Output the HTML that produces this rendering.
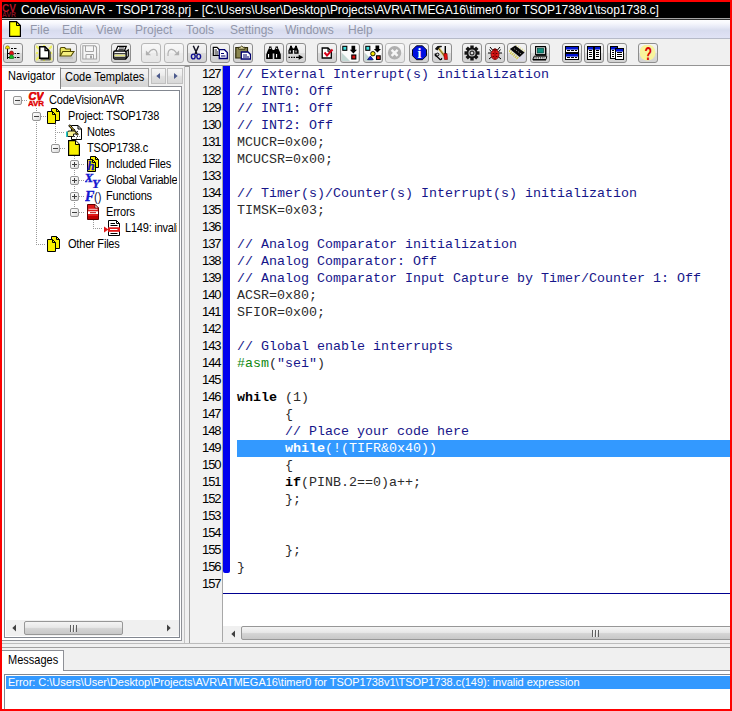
<!DOCTYPE html>
<html>
<head>
<meta charset="utf-8">
<title>CodeVisionAVR</title>
<style>
*{margin:0;padding:0;box-sizing:border-box}
html,body{width:732px;height:711px;overflow:hidden;background:#fe0000}
body{position:relative;font-family:"Liberation Sans",sans-serif;font-size:11px;color:#000}
.abs{position:absolute}
#win{position:absolute;left:2px;top:2px;width:728px;height:707px;background:#f0f0f0;overflow:hidden}
/* coordinates inside #win are page coords minus 2 */
#title{position:absolute;left:0;top:0;width:728px;height:16px;background:#000}
#title .t{position:absolute;left:19px;top:0;height:16px;line-height:16px;color:#fff;font-size:12px;white-space:nowrap;letter-spacing:-0.047px}
#tline{position:absolute;left:0;top:16px;width:728px;height:2px;background:linear-gradient(#a4a4a4 0,#a4a4a4 50%,#2c2c2c 50%,#2c2c2c 100%)}
#menu{position:absolute;left:0;top:18px;width:728px;height:18px;background:linear-gradient(#fdfdff 0%,#f7f8fd 17%,#e6e9f6 40%,#d8dcee 58%,#dcdff2 78%,#e0e3f5 100%)}
#menu span{position:absolute;top:2px;height:16px;line-height:16px;font-size:12px;color:#9297aa;white-space:nowrap}
#mline{position:absolute;left:0;top:36px;width:728px;height:1px;background:#b6bac8}
#tb{position:absolute;left:0;top:37px;width:728px;height:26px;background:#f0f0f0}
.b{position:absolute;top:4px;width:20px;height:20px;border:1px solid #8e8e8e;border-radius:3px;background:linear-gradient(#f4f4f4 0%,#ebebeb 48%,#dadada 52%,#d2d2d2 100%);overflow:hidden}
.b.dis{border-color:#b8b8b8;background:linear-gradient(#f8f8f8 0%,#f1f1f1 48%,#ebebeb 52%,#e6e6e6 100%)}
.b.hot{background:linear-gradient(#f2f2e2 0%,#ecead2 48%,#dedcc4 52%,#d8d8c6 100%)}
.b svg{position:absolute;left:1px;top:1px;width:16px;height:16px}
#tbline{position:absolute;left:0;top:63px;width:728px;height:1.500px;background:#949494}

/* left panel (coords inside #win = page-2) */
#lp{position:absolute;left:0;top:64px;width:183px;height:576px;background:#f0f0f0}
#lpr{position:absolute;left:182px;top:64px;width:1px;height:577px;background:#c4c4c4}
#tab1{position:absolute;left:0;top:1px;width:59px;height:22px;z-index:3;background:#fdfdfd;border-right:1px solid #828282;border-top:1px solid #ececec}
#tab1 span{position:absolute;left:6px;top:2px;line-height:13px;font-size:11px;letter-spacing:0px;white-space:nowrap;transform:scaleY(1.1);transform-origin:0 80%}
#tab2{position:absolute;left:59px;top:2px;width:88px;height:19px;z-index:2;border:1px solid #a0a0a0;border-bottom:none;border-left:none;background:linear-gradient(#f4f4f4 0%,#ececec 45%,#dedede 55%,#d4d4d4 100%)}
#tab2 span{position:absolute;left:4px;top:2px;line-height:13px;font-size:11px;white-space:nowrap;transform:scaleY(1.1);transform-origin:0 80%}
.sb{position:absolute;top:2px;height:16px;border:1px solid #c0c0c0;background:linear-gradient(#f6f6f6 0%,#ececec 45%,#e0e0e0 55%,#d8d8d8 100%)}
#page{position:absolute;left:0;top:20px;width:180px;height:555px;background:#fff;border:1px solid #8e9096;border-left:none}
#treebox{position:absolute;left:2px;top:24px;width:176px;height:548px;background:#fff;border:1px solid #828790;overflow:hidden}
#tree{position:absolute;left:0;top:0;width:172px;height:528px;overflow:hidden}
.tl{position:absolute;font-size:11px;line-height:14px;white-space:nowrap;letter-spacing:-0.2px;transform:scaleY(1.1);transform-origin:0 80%}
.xb{position:absolute;z-index:2;width:9px;height:9px;border:1px solid #969696;border-radius:2px;background:linear-gradient(135deg,#fff 0%,#f0f0f0 50%,#d8d8d8 100%)}
.xb .h{position:absolute;left:1px;top:3px;width:5px;height:1px;background:#404040}
.xb .v{position:absolute;left:3px;top:1px;width:1px;height:5px;background:#404040}
.hd{position:absolute;height:1px;background:repeating-linear-gradient(90deg,#9a9a9a 0,#9a9a9a 1px,transparent 1px,transparent 2px)}
.vd{position:absolute;width:1px;background:repeating-linear-gradient(180deg,#9a9a9a 0,#9a9a9a 1px,transparent 1px,transparent 2px)}
#hs1{position:absolute;left:1px;top:529px;width:173px;height:16px;background:#f0f0f0}
.thumb{position:absolute;border:1px solid #979797;border-radius:2px;background:linear-gradient(#f4f4f4 0%,#e8e8e8 45%,#d4d4d4 55%,#c8c8c8 100%)}
.grip{position:absolute;width:7px;height:7px;background:repeating-linear-gradient(90deg,#606060 0,#606060 1px,#f0f0f0 1px,#f0f0f0 2px,transparent 2px,transparent 3px)}
/* editor */
#edl{position:absolute;left:187px;top:64px;width:1px;height:577px;background:#a0a0a0}
#ed{position:absolute;left:188px;top:64px;width:540px;height:576px;background:#fff;overflow:hidden}
#gut{position:absolute;left:0;top:0;width:33px;height:576px;background:#f2f2f2;border-right:1px solid #a8a8a8}
#nums{position:absolute;left:0;top:-1px;width:32px;text-align:right;font-size:13px;line-height:17px;letter-spacing:-1.100px;color:#000}
#nums div{height:17px;padding-right:1.500px}
#bar{position:absolute;left:33px;top:0;width:7px;height:507px;background:#0000ee;border-radius:0 0 2px 2px}
#code{position:absolute;left:47px;top:0px;width:500px;font-family:"Liberation Mono",monospace;font-size:13.333px;line-height:17px;color:#2c2c2c}
#code div{height:17px;white-space:pre}
#code .c{color:#16168a}
#code .g{color:#108810}
#code .k{font-weight:bold;color:#000}
#code .sel{background:#3399ff;color:#fff}
#code .sel span{color:#fff}
#eof{position:absolute;left:33px;top:527px;width:510px;height:1px;background:#000090}
#hs2{position:absolute;left:33px;top:560px;width:510px;height:16px;background:#f0f0f0}
/* bottom */
#sp1{position:absolute;left:0;top:640.500px;width:728px;height:1px;background:#bcbcbc}
#sp2{position:absolute;left:0;top:645px;width:728px;height:1px;background:#a0a0a0}
#mtab{position:absolute;left:0;top:648px;width:62px;height:21px;background:#fff;border-top:1px solid #8e9096;border-right:1px solid #8e9096}
#mtab span{position:absolute;left:6px;top:3px;font-size:11px;line-height:13px;transform:scaleY(1.1);transform-origin:0 80%}
#mpage{position:absolute;left:0;top:668px;width:728px;height:40px;background:#fff;border-top:1px solid #8e9096}
#mtab{z-index:2}
#mlist{position:absolute;left:2px;top:672px;width:730px;height:40px;border:1px solid #828790;background:#fff}
#mrow{position:absolute;left:1px;top:1px;width:726px;height:13px;background:#3399ff;color:#fff;font-size:11px;line-height:13px;white-space:nowrap;padding-left:2px;letter-spacing:-0.035px}
</style>
</head>
<body>
<div id="win">
  <div id="title">
    <svg class="abs" style="left:0;top:1px" width="16" height="15" viewBox="0 0 16 15">
      <text x="0" y="8.5" font-family="Liberation Sans" font-weight="bold" font-size="10.5" fill="#b81428" textLength="14" lengthAdjust="spacingAndGlyphs">CV</text>
      <text x="0" y="14" font-family="Liberation Sans" font-weight="bold" font-size="6.5" fill="#801020" textLength="14" lengthAdjust="spacingAndGlyphs">AVR</text>
    </svg>
    <div class="t" id="titletext">CodeVisionAVR - TSOP1738.prj - [C:\Users\User\Desktop\Projects\AVR\ATMEGA16\timer0 for TSOP1738v1\tsop1738.c]</div>
  </div>
  <div id="tline"></div>
  <div id="menu">
    <svg class="abs" style="left:7px;top:1px" width="12" height="16" viewBox="0 0 12 16">
      <path d="M0.600 0.600H7.500L11.400 4.500V15.400H0.600Z" fill="#ffff00" stroke="#000" stroke-width="1.200"/>
      <path d="M7.500 1V4.500H11" fill="none" stroke="#000" stroke-width="1"/>
    </svg>
    <span style="left:28px">File</span>
    <span style="left:60px">Edit</span>
    <span style="left:94px">View</span>
    <span style="left:133px">Project</span>
    <span style="left:184px">Tools</span>
    <span style="left:228px">Settings</span>
    <span style="left:283px">Windows</span>
    <span style="left:346px">Help</span>
  </div>
  <div id="mline"></div>
  <div id="tb">
    <div class="b " style="left:1px"><svg viewBox="0 0 16 16"><path d="M2.500 3V14M2.500 8.500H5M2.500 12.500H5" stroke="#000" fill="none"/>
<path d="M0.500 2.800Q0.500 0.800 2.500 0.800Q4.500 0.800 4.500 2.800V3.800H0.500Z" fill="#f4e400" stroke="#706000" stroke-width=".600"/>
<path d="M4.500 8Q4.500 6 6.500 6Q8.500 6 8.500 8V9.500H4.500Z" fill="#e01010" stroke="#700000" stroke-width=".600"/>
<path d="M4.500 12Q4.500 10 6.500 10Q8.500 10 8.500 12V13.500H4.500Z" fill="#10c020" stroke="#005000" stroke-width=".600"/>
<path d="M6 3.500H8M9 3.500H11.500M9.500 8.500H11M12 8.500H14.500M9.500 12.500H11M12 12.500H14.500" stroke="#000" fill="none"/></svg></div>
<div class="b hot" style="left:32px"><svg viewBox="0 0 16 16"><path d="M0 1L3 4M16 1L13 4M0 15L3 12M16 15L13 12M8 -1V1M8 17V14.500M-1 8H2M17 8H14.500" stroke="#eef060" stroke-width="2"/>
<path d="M4.500 14.800H14.200V6.500" stroke="#303030" stroke-width="1" fill="none"/>
<path d="M3.700 1.700H9L12.800 5.500V13.300H3.700Z" fill="#fff" stroke="#000" stroke-width="1.500"/>
<path d="M9 1.700V5.500H12.800" fill="none" stroke="#000" stroke-width="1.300"/></svg></div>
<div class="b " style="left:54.5px"><svg viewBox="0 0 16 16"><path d="M1 13H14" stroke="#c4c4c4" stroke-width="2.500"/>
<path d="M1.200 11V4Q1.200 2.500 2.700 2.500H5.500L7 4H11.500V6.500" fill="#ece860" stroke="#504800" stroke-width="1.100"/>
<path d="M1.200 11L3.800 6.500H15L12 11Z" fill="#f6f080" stroke="#504800" stroke-width="1.100"/></svg></div>
<div class="b dis" style="left:77.5px"><svg viewBox="0 0 16 16"><path d="M0.800 0.800H13L14.500 2.300V14H0.800Z" fill="#f6f6f6" stroke="#a4a4a4" stroke-width="1.100"/>
<path d="M3.500 0.800V6.500H11.500V0.800M4 14V9.500H11.500V14" fill="none" stroke="#a4a4a4"/>
<rect x="8" y="10.500" width="2" height="3" fill="#a4a4a4"/></svg></div>
<div class="b " style="left:108.5px"><svg viewBox="0 0 16 16"><path d="M2.800 6L4.800 1.300H13.300L11.300 6" fill="#fff" stroke="#000" stroke-width="1.200"/>
<path d="M6 2.900H11.300M5.500 4.400H10.800" stroke="#000" stroke-width=".800"/>
<path d="M13 6.500L15.300 4.800V11L13 13.800Z" fill="#d8d8d8" stroke="#000" stroke-width="1.100"/>
<rect x="0.700" y="6" width="12.300" height="8" rx="1.200" fill="#f6f6f6" stroke="#000" stroke-width="1.300"/>
<path d="M1.300 8.800H12.500" stroke="#000" stroke-width="1.100"/>
<path d="M1.600 10.600H12.200" stroke="#e4e478" stroke-width="1.500"/>
<path d="M1.300 12.300H12.500" stroke="#000" stroke-width="1"/></svg></div>
<div class="b dis" style="left:139px"><svg viewBox="0 0 16 16"><path d="M5.500 8Q8 4 11 4.300Q14.500 5 14 11" fill="none" stroke="#b0b0b0" stroke-width="1.200"/>
<path d="M2.900 5.400V10.200H8Z" fill="#b0b0b0"/></svg></div>
<div class="b dis" style="left:162px"><svg viewBox="0 0 16 16"><path d="M10.500 8Q8 4 5 4.300Q1.500 5 2 11" fill="none" stroke="#b0b0b0" stroke-width="1.200"/>
<path d="M13.100 5.400V10.200H8Z" fill="#b0b0b0"/></svg></div>
<div class="b " style="left:184.5px"><svg viewBox="0 0 16 16"><path d="M4.300 0.800L8 9M9.700 0.800L6 9" stroke="#101020" stroke-width="1.500" fill="none"/>
<ellipse cx="4.300" cy="11.500" rx="1.900" ry="2.400" fill="none" stroke="#101090" stroke-width="1.400"/>
<ellipse cx="9.700" cy="11.500" rx="1.900" ry="2.400" fill="none" stroke="#101090" stroke-width="1.400"/></svg></div>
<div class="b " style="left:207.5px"><svg viewBox="0 0 16 16"><path d="M1.300 2.300H5L7.500 4.800V10.500H1.300Z" fill="#fff" stroke="#000" stroke-width="1.200"/>
<path d="M2.500 5H5M2.500 7H6M2.500 9H6" stroke="#000" stroke-width=".900"/>
<path d="M7.300 4.700H12.500L15.300 7.500V13.500H7.300Z" fill="#fff" stroke="#000070" stroke-width="1.300"/>
<path d="M9 8.500H12M9 11H13.500" stroke="#000070" stroke-width="1.100"/></svg></div>
<div class="b " style="left:230.5px"><svg viewBox="0 0 16 16"><path d="M0.800 2.500H12.500V13H0.800Z" fill="#8a8650" stroke="#2c2808" stroke-width="1.200"/>
<path d="M3.500 3.500V2.300H5.200Q6.700 -0.300 8.200 2.300H10V4.200H3.500Z" fill="#e0dca0" stroke="#2c2808" stroke-width=".900"/>
<path d="M6.300 7H13L15.500 9.500V14H6.300Z" fill="#fff" stroke="#000070" stroke-width="1.300"/>
<path d="M8 10H12M8 12H14" stroke="#000070" stroke-width="1.100"/></svg></div>
<div class="b " style="left:262px"><svg viewBox="0 0 16 16"><path d="M3 1.500H5.500V3L6.500 4.500V5H8.500V4.500L9.500 3V1.500H12V3L13.500 6L14.800 9.500V14H8.300V8.500H6.700V14H0.200V9.500L1.500 6L3 3Z" fill="#000"/>
<rect x="2" y="9" width="1.100" height="3.500" fill="#fff"/><rect x="10" y="9" width="1.100" height="3.500" fill="#fff"/>
<rect x="3.700" y="2.800" width="1" height="1.200" fill="#fff"/><rect x="10.200" y="2.800" width="1" height="1.200" fill="#fff"/></svg></div>
<div class="b " style="left:284px"><svg viewBox="0 0 16 16"><path d="M2 0.800H4V2L4.800 3V3.500H6.200V3L7 2V0.800H9V2L10.600 5.500V8.700H6.200V5H4.800V8.700H0.400V5.500L2 2Z" fill="#000"/>
<rect x="1.700" y="5.500" width="1" height="2" fill="#fff"/><rect x="7.500" y="5.500" width="1" height="2" fill="#fff"/>
<path d="M0.500 12.300H2M3 12.300H4.500M5.500 12.300H7M8 12.300H11.500" stroke="#000" stroke-width="1.300"/>
<path d="M10.700 9.800L15.300 12.300L10.700 14.800Z" fill="#000"/></svg></div>
<div class="b " style="left:314.5px"><svg viewBox="0 0 16 16"><path d="M3.200 3H9L12.300 6.300V13H3.200Z" fill="#fff" stroke="#000" stroke-width="1.300"/>
<path d="M9 3V6.300H12.300" fill="none" stroke="#000" stroke-width="1.100"/>
<path d="M5.500 7.500L8 10.500L13.500 4.500" fill="none" stroke="#d80018" stroke-width="2"/></svg></div>
<div class="b " style="left:338px"><svg viewBox="0 0 16 16"><rect x="-1" y="-1" width="18" height="18" fill="#fbfbfb"/><path d="M-1 7V17H9Z" fill="#c4d8d4"/>
<rect x="0.800" y="1.300" width="4" height="4" fill="#40e0e0" stroke="#000" stroke-width="1.100"/>
<rect x="9.800" y="10" width="4" height="4" fill="#e01010" stroke="#000" stroke-width="1.100"/>
<path d="M9.500 0.800V4.800H7.800L11.400 8.400L15 4.800H13.200V0.800Z" fill="#000"/></svg></div>
<div class="b " style="left:360.5px"><svg viewBox="0 0 16 16"><rect x="-1" y="-1" width="18" height="18" fill="#fbfbfb"/><path d="M-1 7V17H9Z" fill="#c4d8d4"/>
<rect x="0.800" y="1.300" width="4" height="4" fill="#40e0e0" stroke="#000" stroke-width="1.100"/>
<rect x="11.500" y="10.800" width="3.700" height="3.700" fill="#e02010" stroke="#000" stroke-width="1.100"/>
<path d="M10.500 0.500V4H8.800L12.400 7.600L16 4H14.200V0.500Z" fill="#000"/>
<circle cx="7.900" cy="8.700" r="2.200" fill="#f8e800" stroke="#000" stroke-width=".900"/>
<path d="M2.500 14.700L5.400 11L8.300 14.700Z" fill="#1020d8" stroke="#000050" stroke-width=".700"/></svg></div>
<div class="b dis" style="left:383px"><svg viewBox="0 0 16 16"><circle cx="7.600" cy="7.800" r="6.700" fill="#b0b0b0"/>
<path d="M4.600 4.800L10.600 10.800M10.600 4.800L4.600 10.800" stroke="#f6f6f6" stroke-width="2.400"/></svg></div>
<div class="b " style="left:406.5px"><svg viewBox="0 0 16 16"><path d="M5.500 0.800H11.500L15.500 4.800V10.700L11.500 14.700H5.500L1.500 10.700V4.800Z" fill="#0010e0" stroke="#000" stroke-width=".900"/>
<text x="8.500" y="13" text-anchor="middle" font-family="Liberation Serif" font-weight="bold" font-size="14" fill="#fff">i</text></svg></div>
<div class="b " style="left:430px"><svg viewBox="0 0 16 16"><path d="M4.500 3L12.500 13.500" stroke="#d4bc50" stroke-width="2.200"/>
<path d="M4 2.500L12.500 13.800" stroke="#504010" stroke-width=".700"/>
<path d="M0.800 4L3.500 1L7.500 0.800L8 2L5.500 2.500L3.500 5.500Z" fill="#101010"/>
<path d="M11.300 1V9" stroke="#000" stroke-width="1.400"/>
<path d="M9.800 8.500H13L13.500 14.500H10.500Z" fill="#e81010" stroke="#700000" stroke-width=".600"/>
<path d="M1.500 8.500Q0.500 11 3 11.500L6 14.500Q8 15 7.500 13" fill="none" stroke="#000" stroke-width="1.300"/>
<circle cx="3.500" cy="9.500" r="1.400" fill="none" stroke="#000" stroke-width="1"/></svg></div>
<div class="b " style="left:460px"><svg viewBox="0 0 16 16"><g transform="translate(8 8)"><g fill="#141414">
<rect x="-1.700" y="-7.500" width="3.400" height="15"/>
<rect x="-1.700" y="-7.500" width="3.400" height="15" transform="rotate(45)"/>
<rect x="-1.700" y="-7.500" width="3.400" height="15" transform="rotate(90)"/>
<rect x="-1.700" y="-7.500" width="3.400" height="15" transform="rotate(135)"/>
<circle r="5.400"/></g>
<circle r="3.600" fill="#c8c8c8"/><circle r="2.500" fill="#303030"/><circle r="1.300" fill="#d8d8d8"/></g></svg></div>
<div class="b " style="left:482.5px"><svg viewBox="0 0 16 16"><path d="M3 2L5.500 5M13 2L10.500 5M1 8H4M15 8H12M2 14L5 11.500M14 14L11 11.500M2.500 4.500L4.500 7M13.500 4.500L11.500 7" stroke="#000" stroke-width="1" fill="none"/>
<ellipse cx="8" cy="9.500" rx="4" ry="5" fill="#e41818" stroke="#700000" stroke-width=".8"/>
<path d="M5.500 5Q8 2 10.500 5Z" fill="#a00000" stroke="#500000" stroke-width=".6"/>
<path d="M8 5V14.500" stroke="#700000" stroke-width=".8"/>
<circle cx="6.300" cy="8.500" r=".8" fill="#600000"/><circle cx="9.700" cy="8.500" r=".8" fill="#600000"/><circle cx="6.300" cy="11.500" r=".8" fill="#600000"/><circle cx="9.700" cy="11.500" r=".8" fill="#600000"/></svg></div>
<div class="b " style="left:505px"><svg viewBox="0 0 16 16"><path d="M-1 9L9 17H17V6Z" fill="#dcdcec" opacity=".7"/>
<path d="M0 6L9.500 14" stroke="#d4cc30" stroke-width="3" stroke-dasharray="1 1.100"/>
<path d="M7.200 0L16.200 6.800" stroke="#e4e090" stroke-width="1.800" stroke-dasharray="1 1.400"/>
<path d="M0.800 3.900L6.200 0.600L15.600 7.600L10.700 12.100Z" fill="#080808"/>
<path d="M5 3.500L12.500 9.300" stroke="#9a9a9a" stroke-width=".800" stroke-dasharray="1.500 1"/></svg></div>
<div class="b " style="left:528px"><svg viewBox="0 0 16 16"><path d="M3.600 1.600H13.400V9.800H3.600Z" fill="#ececec" stroke="#000" stroke-width="1.100"/>
<path d="M4 10H13.800V2.500" fill="none" stroke="#000" stroke-width="1.300"/>
<rect x="5.300" y="3.200" width="6.200" height="4.800" fill="#109080" stroke="#004038" stroke-width=".700"/>
<path d="M2.200 11.200H14.800L14 14.500H0.800Z" fill="#f4f4f4" stroke="#000" stroke-width="1"/>
<path d="M2.500 12.800H13.500" stroke="#000" stroke-width="1.200" stroke-dasharray="1 .800"/>
<path d="M1 15H14" stroke="#000" stroke-width="1"/></svg></div>
<div class="b " style="left:560px"><svg viewBox="0 0 16 16"><rect x="1.5" y="1.5" width="13" height="6" fill="#fff" stroke="#000"/><rect x="2" y="2" width="12" height="2.600" fill="#0014d0"/><rect x="1.5" y="8.5" width="13" height="6" fill="#fff" stroke="#000"/><rect x="2" y="9" width="12" height="2.600" fill="#0014d0"/><path d="M3 5.500H6M7 5.500H10M11 5.500H13M3 12.500H6M7 12.500H10M11 12.500H13" stroke="#000"/></svg></div>
<div class="b " style="left:582px"><svg viewBox="0 0 16 16"><rect x="1.5" y="1.5" width="6" height="13" fill="#fff" stroke="#000"/><rect x="2" y="2" width="5" height="2.600" fill="#0014d0"/><rect x="8.5" y="1.5" width="6" height="13" fill="#fff" stroke="#000"/><rect x="9" y="2" width="5" height="2.600" fill="#0014d0"/><path d="M3 5.500H6M3 7.500H6M3 9.500H6M3 11.500H6M10 5.500H13M10 7.500H13M10 9.500H13M10 11.500H13" stroke="#000"/></svg></div>
<div class="b " style="left:604.5px"><svg viewBox="0 0 16 16"><rect x="1.5" y="1.5" width="7" height="12" fill="#fff" stroke="#000"/><rect x="2" y="2" width="6" height="2.600" fill="#0014d0"/><rect x="6.5" y="3.5" width="8" height="11" fill="#fff" stroke="#000"/><rect x="7" y="4" width="7" height="2.600" fill="#0014d0"/><path d="M3 5.500H5M3 7.500H5M3 9.500H5M3 11.500H5M8 7.500H13M8 9.500H13M8 11.500H13" stroke="#000"/></svg></div>
<div class="b " style="left:636px"><svg viewBox="0 0 16 16"><circle cx="7.500" cy="7.500" r="8" fill="#f8f49c"/>
<text x="8.300" y="14.500" text-anchor="middle" font-family="Liberation Sans" font-weight="bold" font-size="17.500" fill="#dc0000" textLength="7.500" lengthAdjust="spacingAndGlyphs">?</text></svg></div>
  </div>
  <div id="tbline"></div>
  <div id="lp">
    <div id="tab1"><span>Navigator</span></div>
    <div id="tab2"><span>Code Templates</span></div>
    <div class="sb" style="left:149px;width:15px"><svg class="abs" style="left:4px;top:4px" width="4" height="6" viewBox="0 0 4 6"><path d="M4 0V6L0.300 3Z" fill="#4c5a8c"/></svg></div>
    <div class="sb" style="left:165px;width:16px"><svg class="abs" style="left:6px;top:4px" width="4" height="6" viewBox="0 0 4 6"><path d="M0 0V6L3.700 3Z" fill="#4c5a8c"/></svg></div>
    <div id="page"></div>
    <div id="treebox">
      <div id="tree">
<div class="hd" style="left:17px;top:9px;width:5px"></div>
<div class="xb" style="left:8px;top:5px"><i class="h"></i></div>
<svg class="abs" style="left:23px;top:1px" width="16" height="16" viewBox="0 0 16 16"><text x="0.500" y="8.300" font-family="Liberation Sans" font-weight="bold" font-style="italic" font-size="10.500" fill="#e00000" stroke="#e00000" stroke-width=".600" textLength="15" lengthAdjust="spacingAndGlyphs">CV</text>
<text x="0" y="14" font-family="Liberation Sans" font-weight="bold" font-size="7.500" fill="#e00000" stroke="#e00000" stroke-width=".400" textLength="16" lengthAdjust="spacingAndGlyphs">AVR</text></svg>
<div class="tl" style="left:44px;top:2px">CodeVisionAVR</div>
<div class="hd" style="left:36px;top:25px;width:5px"></div>
<div class="xb" style="left:27px;top:21px"><i class="h"></i></div>
<svg class="abs" style="left:42px;top:17px" width="13" height="16" viewBox="0 0 13 16"><path d="M4.500 0.500H9.500L12.500 3.500V12.500H4.500Z" fill="#f8f000" stroke="#000"/>
<path d="M9.500 0.500V3.500H12.500" fill="none" stroke="#000"/>
<path d="M0.500 3.500H5.500L8.500 6.500V15.500H0.500Z" fill="#f8f000" stroke="#000"/>
<path d="M5.500 3.500V6.500H8.500" fill="none" stroke="#000"/></svg>
<div class="tl" style="left:63px;top:18px">Project: TSOP1738</div>
<div class="hd" style="left:50px;top:41px;width:10px"></div>
<svg class="abs" style="left:61px;top:33px" width="16" height="16" viewBox="0 0 16 16"><path d="M5.500 1.500H12L15.500 5V15.500H5.500Z" fill="#fff" stroke="#000"/>
<path d="M12 1.500V5H15.500" fill="none" stroke="#000"/>
<path d="M8 5.500H10M11 7.500H13M8 12.500H9.500M11 12.500H13.500M10 14H12" stroke="#000" stroke-width=".8" stroke-dasharray="1 1"/>
<path d="M3 1L12 11" stroke="#000" stroke-width="2.200"/>
<path d="M3.500 1.500L11.500 10.500" stroke="#e8c830" stroke-width="1"/>
<path d="M1.500 8.500Q1.500 7 3 7H8Q10 7 10 9V10H7.500V12.500H1.500Z" fill="#f8f090" stroke="#000" stroke-width=".9"/>
<path d="M0.800 7.500V13" stroke="#20c8c8" stroke-width="1.600"/></svg>
<div class="tl" style="left:82px;top:34px">Notes</div>
<div class="hd" style="left:55px;top:57px;width:5px"></div>
<div class="xb" style="left:46px;top:53px"><i class="h"></i></div>
<svg class="abs" style="left:62px;top:49px" width="13" height="16" viewBox="0 0 13 16"><path d="M1.600 0.600H8.500L12.400 4.500V15.400H1.600Z" fill="#f8f000" stroke="#000" stroke-width="1.200"/>
<path d="M8.500 0.600V4.500H12.400" fill="#fff8a0" stroke="#000" stroke-width="1"/></svg>
<div class="tl" style="left:82px;top:50px">TSOP1738.c</div>
<div class="hd" style="left:74px;top:73px;width:5px"></div>
<div class="xb" style="left:65px;top:69px"><i class="h"></i><i class="v"></i></div>
<svg class="abs" style="left:81px;top:65px" width="14" height="16" viewBox="0 0 14 16"><path d="M4.500 0.500H9.500L12.500 3.500V11.500H4.500Z" fill="#f8f000" stroke="#000"/>
<path d="M9.500 0.500V3.500H12.500" fill="none" stroke="#000"/>
<path d="M1.500 3.500H6.500L9.500 6.500V15.500H1.500Z" fill="#f8f000" stroke="#000"/>
<path d="M6.500 3.500V6.500H9.500" fill="none" stroke="#000"/>
<text x="1.500" y="14.300" font-family="Liberation Serif" font-weight="bold" font-style="italic" font-size="13" fill="#1414b8" stroke="#1414b8" stroke-width=".300">h</text></svg>
<div class="tl" style="left:101px;top:66px">Included Files</div>
<div class="hd" style="left:74px;top:89px;width:5px"></div>
<div class="xb" style="left:65px;top:85px"><i class="h"></i><i class="v"></i></div>
<svg class="abs" style="left:80px;top:81px" width="16" height="16" viewBox="0 0 16 16"><text x="-0.500" y="9.500" font-family="Liberation Serif" font-weight="bold" font-style="italic" font-size="13" fill="#1418d0" stroke="#1418d0" stroke-width=".400">X</text>
<text x="7" y="15.500" font-family="Liberation Serif" font-weight="bold" font-style="italic" font-size="13" fill="#1418d0" stroke="#1418d0" stroke-width=".400">Y</text></svg>
<div class="tl" style="left:101px;top:82px">Global Variables</div>
<div class="hd" style="left:74px;top:105px;width:5px"></div>
<div class="xb" style="left:65px;top:101px"><i class="h"></i><i class="v"></i></div>
<svg class="abs" style="left:80px;top:97px" width="17" height="16" viewBox="0 0 17 16"><text x="0" y="13" font-family="Liberation Serif" font-weight="bold" font-style="italic" font-size="14" fill="#1418d0" stroke="#1418d0" stroke-width=".400">F</text>
<text x="9" y="12.500" font-family="Liberation Sans" font-size="13" fill="#101040" textLength="7.500" lengthAdjust="spacingAndGlyphs">()</text></svg>
<div class="tl" style="left:101px;top:98px">Functions</div>
<div class="hd" style="left:74px;top:121px;width:5px"></div>
<div class="xb" style="left:65px;top:117px"><i class="h"></i></div>
<svg class="abs" style="left:80px;top:113px" width="15" height="16" viewBox="0 0 15 16"><g transform="translate(2 0)"><path d="M0.500 0.500H8L11.500 4V15.500H0.500Z" fill="#e01818" stroke="#600000"/>
<path d="M8 0.500V4H11.500Z" fill="#fff" stroke="#600000" stroke-width=".800"/>
<rect x="1.500" y="4.800" width="9" height="1" fill="#f8d0d0"/>
<rect x="1" y="7.300" width="10" height="2.700" fill="#fff"/>
<rect x="3" y="8.200" width="6" height="1" fill="#c00000"/>
<rect x="1" y="12" width="10" height="3" fill="#c00000"/></g></svg>
<div class="tl" style="left:101px;top:114px">Errors</div>
<div class="hd" style="left:88px;top:137px;width:10px"></div>
<svg class="abs" style="left:99px;top:129px" width="16" height="16" viewBox="0 0 16 16"><path d="M4.500 0.500H12.500L15.500 3.500V15.500H4.500Z" fill="#fff" stroke="#000"/>
<path d="M12.500 0.500V3.500H15.500" fill="none" stroke="#000"/>
<path d="M6.500 3.500H11M6.500 5.500H13.500M6.500 13.500H13.500" stroke="#000"/>
<rect x="4" y="7.300" width="12" height="4.500" fill="#e01818"/>
<path d="M6 9.500H13.500" stroke="#fff" stroke-width="1"/>
<path d="M0 6.500L4.500 9.500L0 12.500Z" fill="#e01818"/></svg>
<div class="tl" style="left:120px;top:130px">L149: invalid expression</div>
<div class="hd" style="left:31px;top:153px;width:10px"></div>
<svg class="abs" style="left:42px;top:145px" width="13" height="16" viewBox="0 0 13 16"><path d="M4.500 0.500H9.500L12.500 3.500V12.500H4.500Z" fill="#f8f000" stroke="#000"/>
<path d="M9.500 0.500V3.500H12.500" fill="none" stroke="#000"/>
<path d="M0.500 3.500H5.500L8.500 6.500V15.500H0.500Z" fill="#f8f000" stroke="#000"/>
<path d="M5.500 3.500V6.500H8.500" fill="none" stroke="#000"/></svg>
<div class="tl" style="left:63px;top:146px">Other Files</div>
<div class="vd" style="left:31px;top:17px;height:136px"></div>
<div class="vd" style="left:50px;top:33px;height:20px"></div>
<div class="vd" style="left:69px;top:65px;height:52px"></div>
<div class="vd" style="left:88px;top:129px;height:8px"></div>
      </div>
      <div id="hs1">
        <svg class="abs" style="left:6px;top:4px" width="4" height="8" viewBox="0 0 4 8"><path d="M4 0.500V7.500L0.300 4Z" fill="#404040"/></svg>
        <div class="thumb" style="left:18px;top:1px;width:99px;height:14px"><div class="grip" style="left:45px;top:3px"></div></div>
        <svg class="abs" style="left:161px;top:4px" width="4" height="8" viewBox="0 0 4 8"><path d="M0 0.500V7.500L3.700 4Z" fill="#404040"/></svg>
      </div>
    </div>
  </div>
  <div id="lpr"></div>
  <div id="edl"></div>
  <div id="ed">
    <div id="gut"></div>
    <div id="bar"></div>
<div id="nums"><div>127</div><div>128</div><div>129</div><div>130</div><div>131</div><div>132</div><div>133</div><div>134</div><div>135</div><div>136</div><div>137</div><div>138</div><div>139</div><div>140</div><div>141</div><div>142</div><div>143</div><div>144</div><div>145</div><div>146</div><div>147</div><div>148</div><div>149</div><div>150</div><div>151</div><div>152</div><div>153</div><div>154</div><div>155</div><div>156</div><div>157</div></div>
<pre id="code"><div><span class="c">// External Interrupt(s) initialization</span></div><div><span class="c">// INT0: Off</span></div><div><span class="c">// INT1: Off</span></div><div><span class="c">// INT2: Off</span></div><div>MCUCR=0x00;</div><div>MCUCSR=0x00;</div><div></div><div><span class="c">// Timer(s)/Counter(s) Interrupt(s) initialization</span></div><div>TIMSK=0x03;</div><div></div><div><span class="c">// Analog Comparator initialization</span></div><div><span class="c">// Analog Comparator: Off</span></div><div><span class="c">// Analog Comparator Input Capture by Timer/Counter 1: Off</span></div><div>ACSR=0x80;</div><div>SFIOR=0x00;</div><div></div><div><span class="c">// Global enable interrupts</span></div><div><span class="g">#asm</span>(<span class="c">"sei"</span>)</div><div></div><div><span class="k">while</span> (1)</div><div>      {</div><div>      <span class="c">// Place your code here</span></div><div class="sel">      <span class="k">while</span>(!(TIFR&amp;0x40))</div><div>      {</div><div>      <span class="k">if</span>(PINB.2==0)a++;</div><div>      };</div><div></div><div></div><div>      };</div><div>}</div><div></div></pre>
    <div id="eof"></div>
    <div id="hs2">
      <svg class="abs" style="left:8px;top:4px" width="4" height="8" viewBox="0 0 4 8"><path d="M4 0.500V7.500L0.300 4Z" fill="#404040"/></svg>
      <div class="thumb" style="left:18px;top:0px;width:520px;height:14px"><div class="grip" style="left:350px;top:3px"></div></div>
    </div>
  </div>
  <div id="sp1"></div><div id="sp2"></div>
  <div id="mpage"></div>
  <div id="mtab"><span>Messages</span></div>
  <div id="mlist"><div id="mrow">Error: C:\Users\User\Desktop\Projects\AVR\ATMEGA16\timer0 for TSOP1738v1\TSOP1738.c(149): invalid expression</div></div>
</div>
</body>
</html>
